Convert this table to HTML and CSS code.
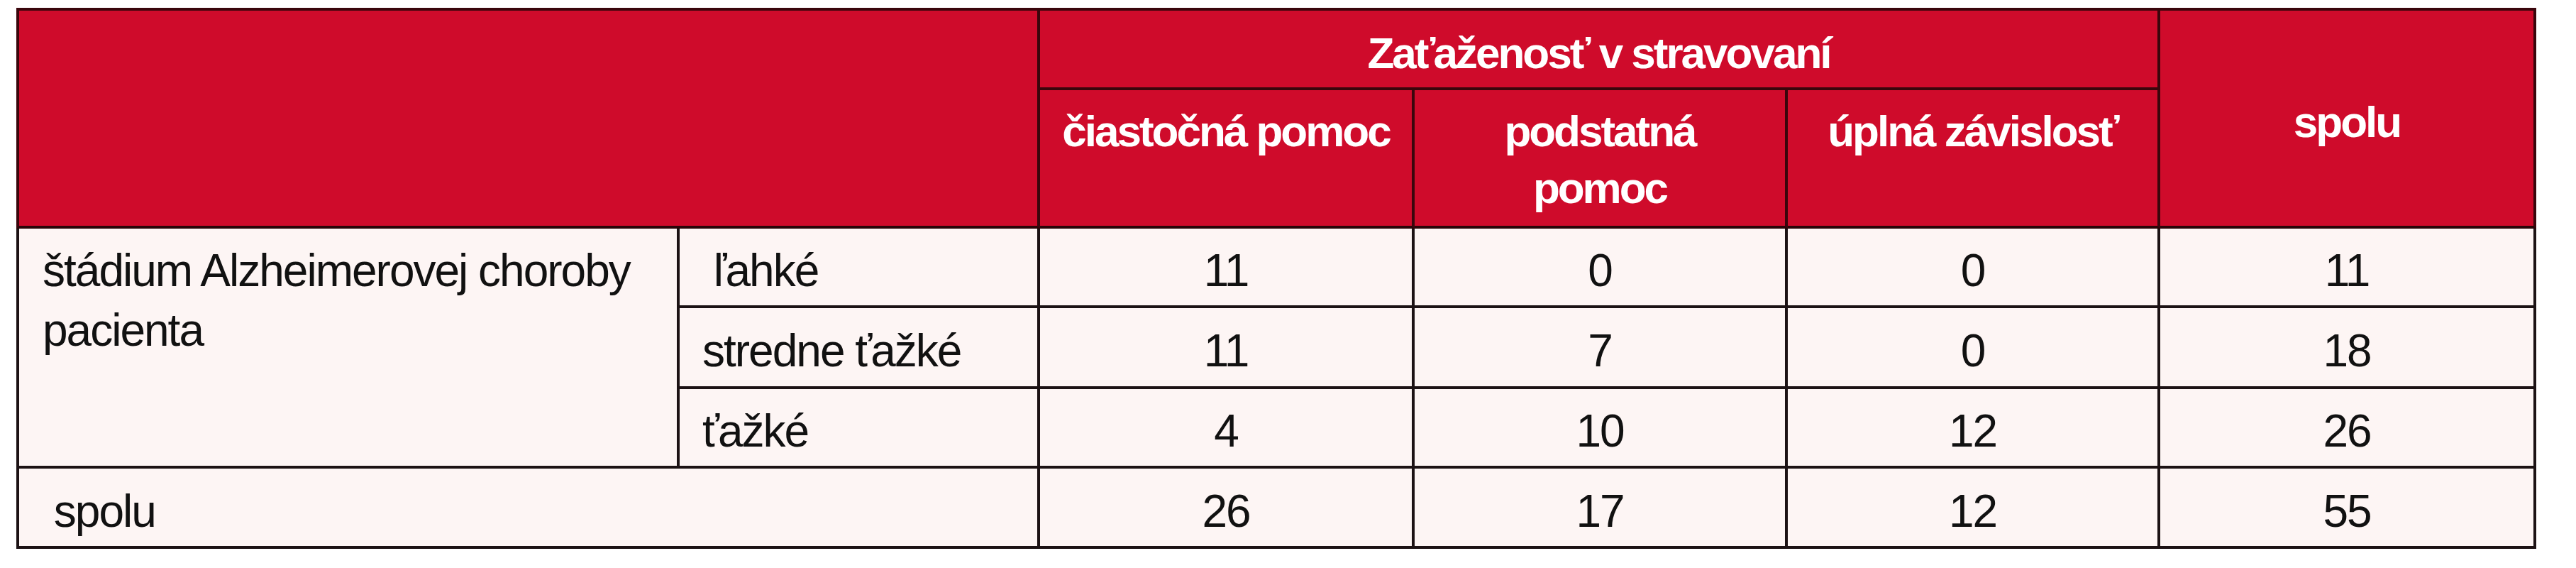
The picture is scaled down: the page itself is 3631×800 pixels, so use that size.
FILE: index.html
```html
<!DOCTYPE html>
<html lang="sk">
<head>
<meta charset="utf-8">
<title>Zaťaženosť v stravovaní</title>
<link rel="stylesheet" href="styles.css">
</head>
<body>
<div class="grid">
  <div class="hd hd-blank first top"></div>
  <div class="hd hd-group top">Zaťaženosť v stravovaní</div>
  <div class="hd hd-total top last">spolu</div>
  <div class="hd hd-sub">čiastočná pomoc</div>
  <div class="hd hd-sub">podstatná<br>pomoc</div>
  <div class="hd hd-sub">úplná závislosť</div>

  <div class="td label stage first">štádium Alzheimerovej choroby pacienta</div>
  <div class="td label">&nbsp;ľahké</div>
  <div class="td num">11</div>
  <div class="td num">0</div>
  <div class="td num">0</div>
  <div class="td num last">11</div>

  <div class="td label">stredne ťažké</div>
  <div class="td num">11</div>
  <div class="td num">7</div>
  <div class="td num">0</div>
  <div class="td num last">18</div>

  <div class="td label">ťažké</div>
  <div class="td num">4</div>
  <div class="td num">10</div>
  <div class="td num">12</div>
  <div class="td num last">26</div>

  <div class="td label total first">&nbsp;spolu</div>
  <div class="td num">26</div>
  <div class="td num">17</div>
  <div class="td num">12</div>
  <div class="td num last">55</div>
</div>
</body>
</html>
```

FILE: styles.css
```css
html, body {
  margin: 0;
  padding: 0;
  background: #ffffff;
}

body {
  font-family: "Liberation Sans", Arial, sans-serif;
}

.grid {
  display: grid;
  grid-template-columns: 935px 508px 528px 526px 525px 530px;
  grid-template-rows: 116px 195px 112px 114px 112px 113px;
  margin: 11px 0 0 23px;
  width: 3552px;
}

.hd, .td {
  box-sizing: border-box;
  display: flex;
  border-right: 4px solid #1c1214;
  border-bottom: 4px solid #1c1214;
}

/* header */
.hd {
  background: #cf0b2b;
  color: #ffffff;
  font-weight: bold;
  font-size: 62px;
  line-height: 80px;
  letter-spacing: -3px;
  border-right-color: #3a060c;
  border-bottom-color: #3a060c;
  justify-content: center;
  text-align: center;
}

.hd.top {
  border-top: 4px solid #3a060c;
}

.hd.first {
  border-left: 4px solid #3a060c;
}

.hd-blank {
  grid-column: 1 / 3;
  grid-row: 1 / 3;
  border-bottom-color: #2a0508;
}

.hd-group {
  grid-column: 3 / 6;
  grid-row: 1;
  align-items: center;
  padding-top: 12px;
}

.hd-total {
  grid-column: 6;
  grid-row: 1 / 3;
  align-items: center;
  padding-top: 10px;
  border-bottom-color: #2a0508;
}

.hd-sub {
  align-items: flex-start;
  padding-top: 18px;
  border-bottom-color: #2a0508;
}

/* body */
.td {
  background: #fdf5f4;
  color: #111111;
  font-size: 64px;
  line-height: 84px;
  letter-spacing: -2px;
  align-items: center;
  padding-top: 10px;
}

.td.first {
  border-left: 4px solid #1c1214;
}

.label {
  justify-content: flex-start;
  padding-left: 32px;
  white-space: nowrap;
}

.stage {
  grid-column: 1;
  grid-row: 3 / 6;
  align-items: flex-start;
  padding-top: 17px;
  padding-left: 33px;
  padding-right: 20px;
  white-space: normal;
}

.total {
  grid-column: 1 / 3;
  padding-left: 33px;
}

.num {
  justify-content: center;
}
```
